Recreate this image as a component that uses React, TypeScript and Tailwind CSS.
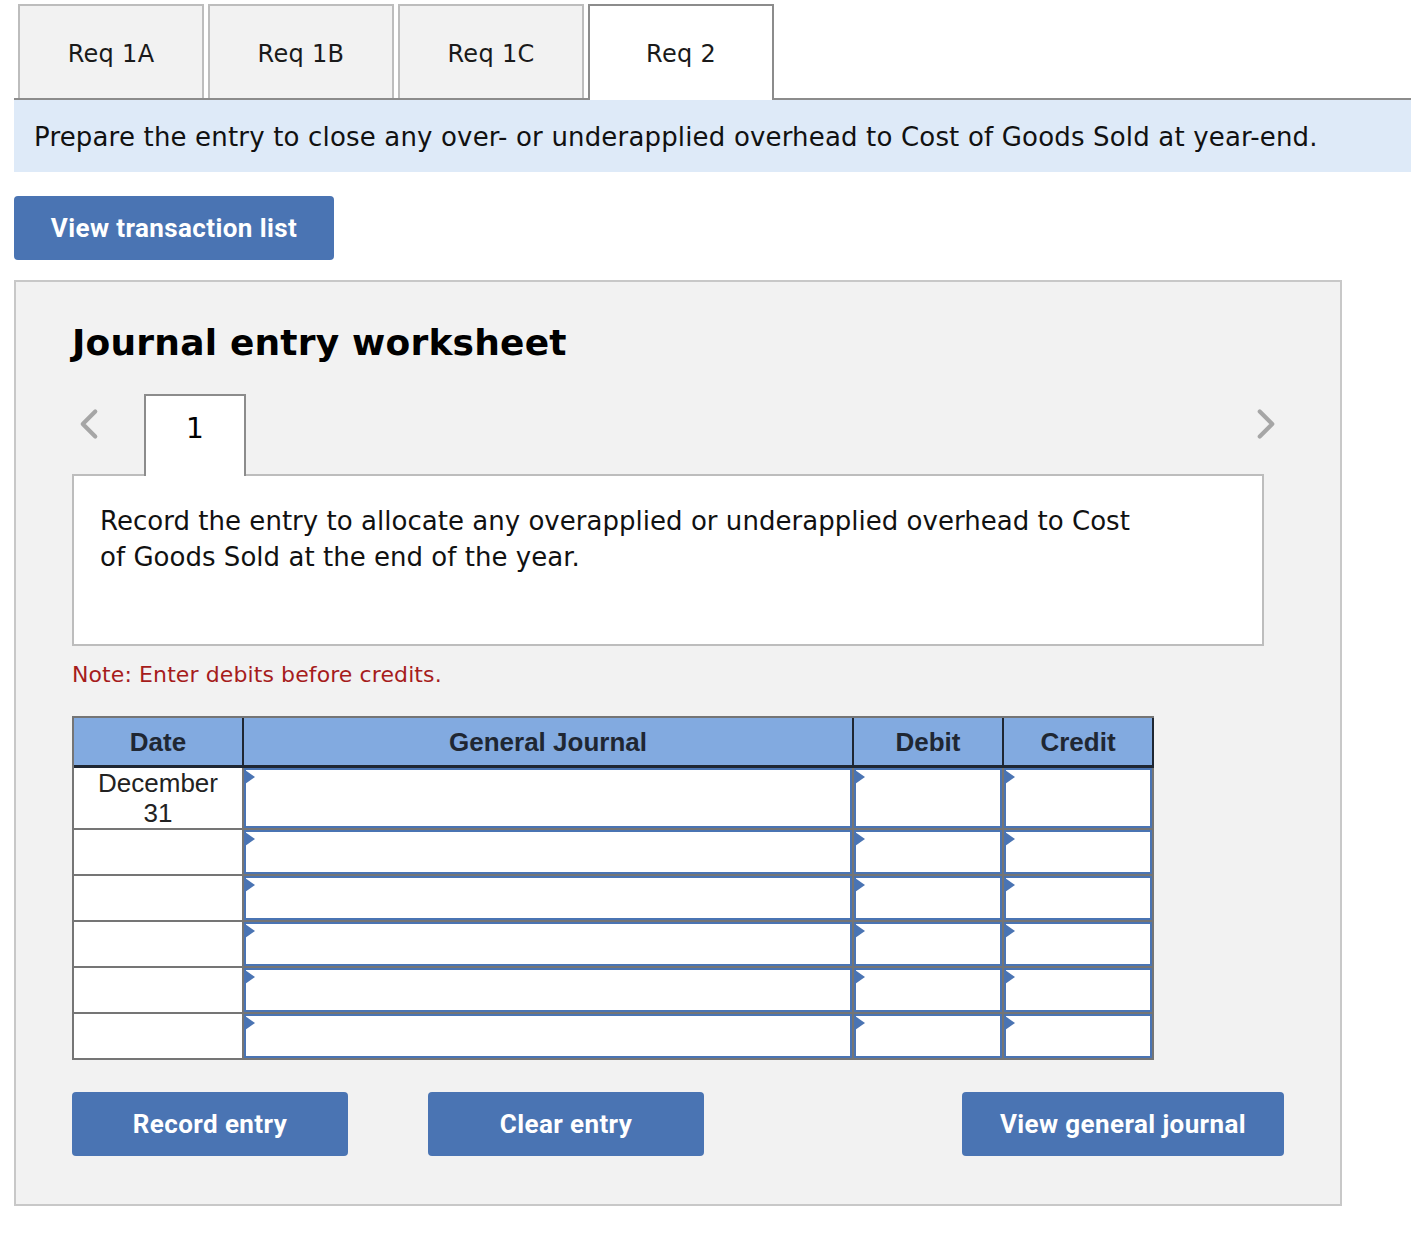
import { ChevronLeft, ChevronRight } from "lucide-react";

const tabs = ["Req 1A", "Req 1B", "Req 1C"];
const rowHeights = ["h-[62px]", "h-[46px]", "h-[46px]", "h-[46px]", "h-[46px]", "h-[46px]"];

function EntryCell({ className }: { className: string }) {
  return (
    <div className={`relative border-l-2 border-b-2 border-[#757575] bg-white ${className}`}>
      <div className="h-full border-2 border-[#4a74b3] bg-white" />
      <svg className="absolute left-[1px] top-[2px]" width="10" height="14" viewBox="0 0 10 14">
        <path d="M0 0 L10 7 L0 14 Z" fill="#4a74b3" />
      </svg>
    </div>
  );
}

function BlueButton({ label, className }: { label: string; className: string }) {
  return (
    <button className={`h-16 rounded bg-[#4a74b3] pt-[1px] text-[26px] font-bold tracking-[0.4px] text-white font-['Roboto',sans-serif] ${className}`}>
      {label}
    </button>
  );
}

export default function App() {
  return (
    <div className="min-h-[1257px] bg-white pl-[14px] pt-1 font-['DejaVu_Sans',sans-serif] text-[#1a1a1a]">
      {/* Req tabs */}
      <div className="flex h-24 gap-1 border-b-2 border-[#8c8c8c] pl-1">
        {tabs.map((t) => (
          <div
            key={t}
            className="flex h-[94px] w-[186px] items-center justify-center border-2 border-b-0 border-[#bdbdbd] bg-[#f2f2f2] pt-1 text-[24px] tracking-[0.3px]"
          >
            {t}
          </div>
        ))}
        <div className="flex h-24 w-[186px] items-center justify-center border-2 border-b-0 border-[#8c8c8c] bg-white pt-[2px] text-[24px] tracking-[0.3px]">
          Req 2
        </div>
      </div>

      <div className="flex h-[72px] items-center bg-[#deeaf8] pl-5 pt-[2px] text-[26px] tracking-[0.17px] text-[#111]">
        Prepare the entry to close any over- or underapplied overhead to Cost of Goods Sold at year-end.
      </div>

      <BlueButton label="View transaction list" className="mt-6 block w-80" />

      {/* Worksheet panel */}
      <div className="mt-5 h-[926px] w-[1328px] border-2 border-[#c8c8c8] bg-[#f2f2f2] pl-14 pt-[38px]">
        <h2 className="text-[36px] font-bold leading-[46px] tracking-[0.2px] text-black">Journal entry worksheet</h2>

        <div className="relative mt-[28px] flex h-[82px] w-[1192px]">
          <ChevronLeft className="absolute -left-2 top-[5px] text-[#a6a6a6]" size={50} strokeWidth={2} />
          <ChevronRight className="absolute -right-[27px] top-[5px] text-[#a6a6a6]" size={50} strokeWidth={2} />
          <div className="z-10 ml-[72px] flex h-[82px] w-[102px] justify-center border-2 border-b-0 border-[#8c8c8c] bg-white pt-[13px] text-[28px] leading-[40px] text-black">
            1
          </div>
        </div>

        <div className="-mt-[2px] h-[172px] w-[1192px] border-2 border-[#bdbdbd] bg-white px-[26px] pt-[27px] text-[26px] leading-9 tracking-[0.03px] text-[#111]">
          Record the entry to allocate any overapplied or underapplied overhead to Cost
          <br />
          of Goods Sold at the end of the year.
        </div>

        <p className="mt-[13px] text-[22px] leading-8 tracking-[0.1px] text-[#a61c1c]">Note: Enter debits before credits.</p>

        {/* Journal table */}
        <div className="mt-[25px] w-[1082px] border-l-2 border-t-2 border-[#757575] font-['Liberation_Sans',sans-serif]">
          <div className="flex h-[50px] items-center border-b-[3px] border-[#1f2733] bg-[#82aae0] text-[26px] font-bold text-[#1f2733]">
            <div className="flex h-full w-[168px] items-center justify-center pt-[2px]">Date</div>
            <div className="flex h-full w-[610px] items-center justify-center border-l-2 border-[#1f2733] pt-[2px]">General Journal</div>
            <div className="flex h-full w-[150px] items-center justify-center border-l-2 border-[#1f2733] pt-[2px]">Debit</div>
            <div className="flex h-full w-[152px] items-center justify-center border-x-2 border-[#1f2733] pt-[2px]">Credit</div>
          </div>
          {rowHeights.map((h, i) => (
            <div key={i} className={`flex ${h}`}>
              <div className="w-[168px] border-b-2 border-[#757575] bg-white text-center text-[26px] leading-[30px] text-[#222]">
                {i === 0 && (
                  <>
                    December
                    <br />
                    31
                  </>
                )}
              </div>
              <EntryCell className="w-[610px]" />
              <EntryCell className="w-[150px]" />
              <EntryCell className="w-[152px] border-r-2" />
            </div>
          ))}
        </div>

        <div className="mt-8 flex w-[1212px]">
          <BlueButton label="Record entry" className="w-[276px]" />
          <BlueButton label="Clear entry" className="ml-20 w-[276px]" />
          <BlueButton label="View general journal" className="ml-auto w-[322px]" />
        </div>
      </div>
    </div>
  );
}
